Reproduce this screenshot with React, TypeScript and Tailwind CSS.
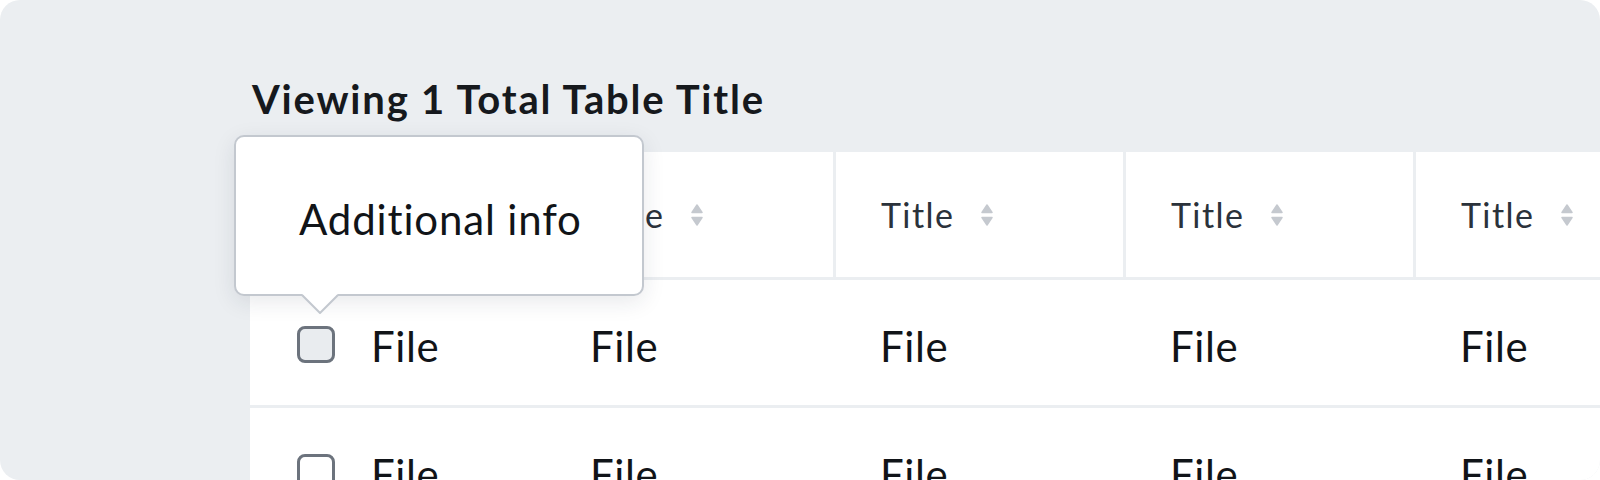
import React from "react";

const font = { fontFamily: "Lato, 'Noto Sans', sans-serif" };

function SortIcon() {
  return (
    <svg width="12" height="22" viewBox="0 0 12 22" className="ml-[27px] shrink-0">
      <path d="M6 1 L11 8.5 L1 8.5 Z" fill="#c5c9cf" stroke="#c5c9cf" strokeWidth="1.5" strokeLinejoin="round" />
      <path d="M1 13.5 L11 13.5 L6 21 Z" fill="#c5c9cf" stroke="#c5c9cf" strokeWidth="1.5" strokeLinejoin="round" />
    </svg>
  );
}

function Checkbox({ filled }: { filled?: boolean }) {
  return (
    <div
      className={
        "w-[38px] h-[37px] shrink-0 rounded-[8px] border-[3px] border-[#6c737d] " +
        (filled ? "bg-[#e9ecef]" : "bg-white")
      }
    />
  );
}

function HeaderCell({ first, last }: { first?: boolean; last?: boolean }) {
  return (
    <div
      className={
        "h-full flex items-center shrink-0 " +
        (first ? "w-[296px] pl-[47px] " : "w-[290px] pl-[45px] ") +
        (last ? "" : "border-r-[3px] border-[#ebeef1]")
      }
    >
      {first && <div className="mr-[36px]"><Checkbox /></div>}
      <span className="text-[34px] leading-[40px] text-[#2b323b] tracking-[1.4px]">Title</span>
      <SortIcon />
    </div>
  );
}

function BodyRow({ filled }: { filled?: boolean }) {
  return (
    <div className="h-[128px] border-b-[3px] border-[#ebeef1] flex items-center pt-[7px]">
      <div className="w-[296px] pl-[47px] flex items-center shrink-0">
        <div className="mb-[4px]">
          <Checkbox filled={filled} />
        </div>
        <span className="ml-[36px] text-[42px] leading-[50px] text-[#111418] tracking-[0.6px]">File</span>
      </div>
      {[0, 1, 2, 3].map((i) => (
        <div key={i} className="w-[290px] pl-[44px] shrink-0">
          <span className="text-[42px] leading-[50px] text-[#111418] tracking-[0.6px]">File</span>
        </div>
      ))}
    </div>
  );
}

export default function App() {
  return (
    <div className="w-[1600px] h-[480px] bg-white overflow-hidden" style={font}>
      <div className="relative h-full rounded-[20px] bg-[#ebeef1] overflow-hidden pl-[250px]">
        <div className="pt-[75px] mb-[29px]">
          <h1 className="text-[40px] leading-[48px] font-bold text-[#16191d] pl-[2px] tracking-[1.8px]">
            Viewing 1 Total Table Title
          </h1>
        </div>
        <div className="bg-white">
          <div className="h-[128px] border-b-[3px] border-[#ebeef1] flex">
            <HeaderCell first />
            <HeaderCell />
            <HeaderCell />
            <HeaderCell />
            <HeaderCell last />
          </div>
          <BodyRow filled />
          <BodyRow />
        </div>

        <div className="absolute left-[234px] top-[135px] w-[410px] h-[161px] rounded-[10px] border-2 border-[#c3c8cf] bg-white shadow-[0_6px_22px_rgba(30,40,55,0.10)] flex items-center pl-[63px] pt-[6px]">
          <span className="text-[42px] leading-[50px] text-[#111418] tracking-[0.85px]">Additional info</span>
        </div>
        <svg
          className="absolute left-[300px] top-[294px] overflow-visible"
          width="40"
          height="22"
          viewBox="0 0 40 22"
        >
          <polygon points="2,0 38,0 20,18" fill="white" />
          <polyline points="2,1 20,19 38,1" fill="none" stroke="#c3c8cf" strokeWidth="2" strokeLinejoin="round" />
        </svg>
      </div>
    </div>
  );
}
